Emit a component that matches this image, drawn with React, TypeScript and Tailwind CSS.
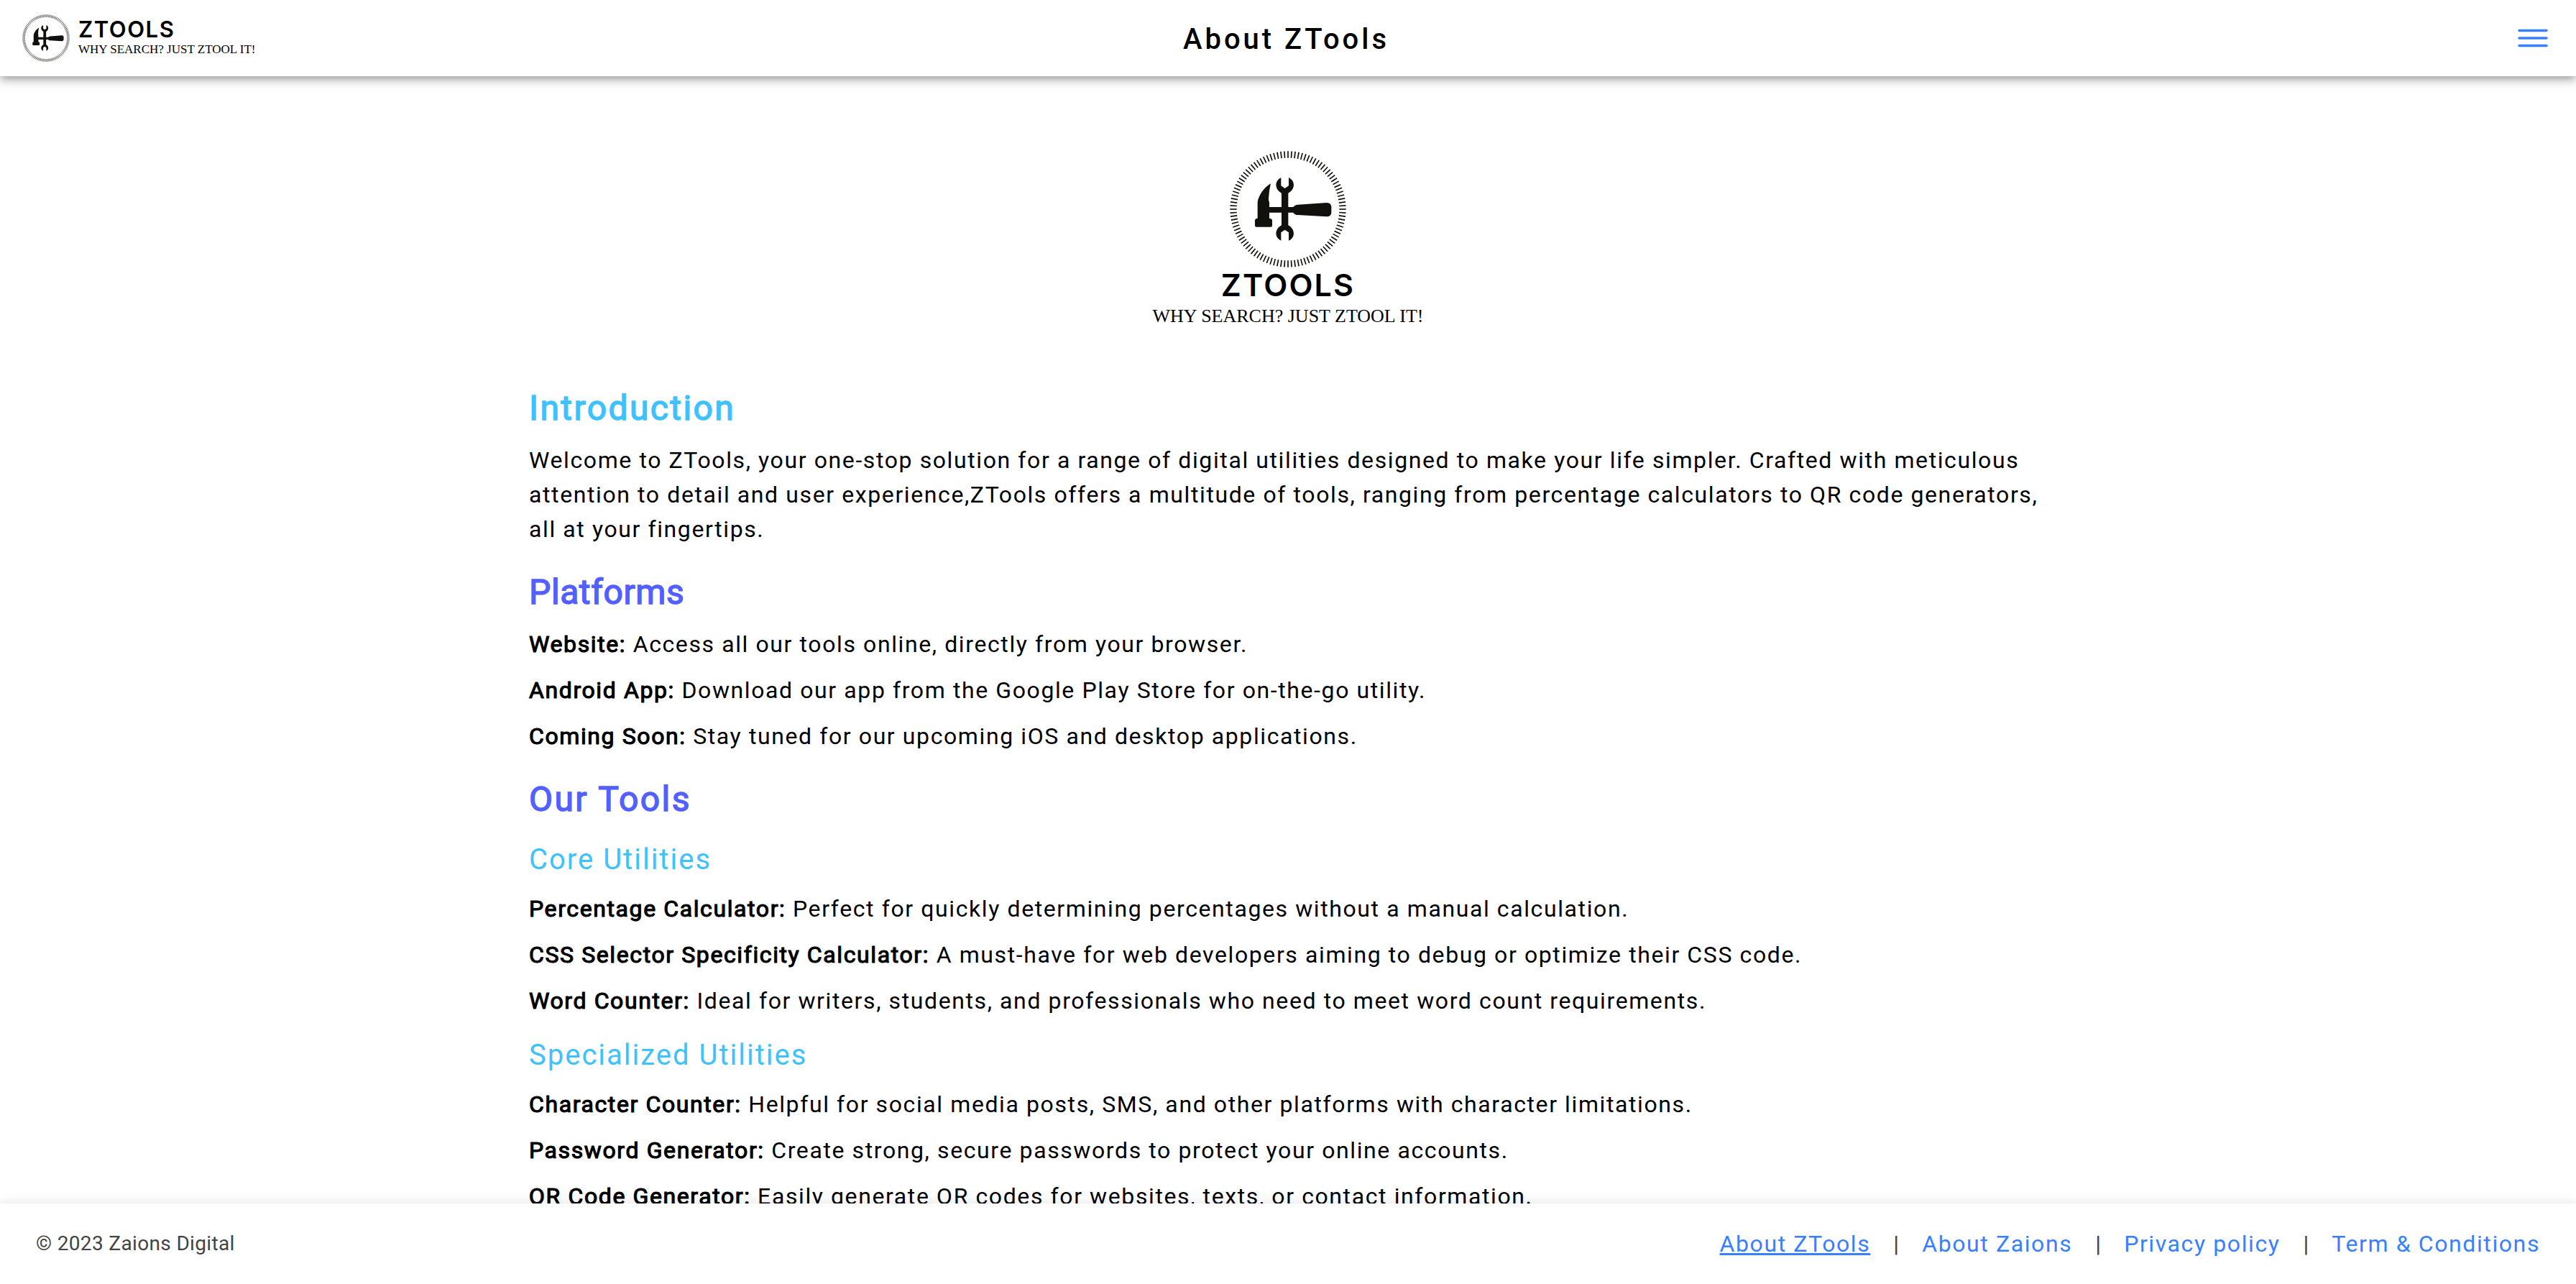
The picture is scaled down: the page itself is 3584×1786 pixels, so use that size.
const TICKS = Array.from({ length: 100 }, (_, i) => i * 3.6);

function Emblem({ className }: { className: string }) {
  return (
    <svg viewBox="-243 -243 486 486" className={className} aria-hidden="true">
      <g stroke="#11100d" strokeWidth="5">
        {TICKS.map((angle) => (
          <line key={angle} x1="0" y1="-242" x2="0" y2="-214" transform={`rotate(${angle})`} />
        ))}
      </g>
      <g fill="#11100d" transform="translate(-639 -305)">
        <path d="M567 198C539 214 515 249 512 276V343Q501 344 501 352V373Q501 379 507 379H567Q573 379 573 373V352Q573 344 561 343V319H612V372C582 388 582 424 610 436V402L626 391L642 402V436C670 424 670 388 640 372V319H661Q667 329 681 329L800 336Q820 336 820 318V296Q820 278 800 278L681 286Q667 287 661 296H640V238C670 222 670 186 642 173V207L626 218L610 207V173C582 186 582 222 612 238V296H561V276Q557 268 558 260Q560 225 567 198Z" />
      </g>
    </svg>
  );
}

type Item = { term: string; text: string };

const platforms: Item[] = [
  { term: "Website:", text: "Access all our tools online, directly from your browser." },
  { term: "Android App:", text: "Download our app from the Google Play Store for on-the-go utility." },
  { term: "Coming Soon:", text: "Stay tuned for our upcoming iOS and desktop applications." },
];

const coreUtilities: Item[] = [
  { term: "Percentage Calculator:", text: "Perfect for quickly determining percentages without a manual calculation." },
  { term: "CSS Selector Specificity Calculator:", text: "A must-have for web developers aiming to debug or optimize their CSS code." },
  { term: "Word Counter:", text: "Ideal for writers, students, and professionals who need to meet word count requirements." },
];

const specializedUtilities: Item[] = [
  { term: "Character Counter:", text: "Helpful for social media posts, SMS, and other platforms with character limitations." },
  { term: "Password Generator:", text: "Create strong, secure passwords to protect your online accounts." },
  { term: "QR Code Generator:", text: "Easily generate QR codes for websites, texts, or contact information." },
];

const footerLinks = ["About ZTools", "About Zaions", "Privacy policy", "Term & Conditions"];

function ItemList({ items }: { items: Item[] }) {
  return (
    <ul className="flex flex-col gap-4">
      {items.map((item) => (
        <li key={item.term}>
          <strong className="font-normal [-webkit-text-stroke:0.035em]">{item.term}</strong> {item.text}
        </li>
      ))}
    </ul>
  );
}

export default function App() {
  return (
    <div className="flex h-screen flex-col bg-white font-[Roboto,sans-serif] text-[32px] leading-[48px] text-black">
      <header className="z-10 grid h-[106px] shrink-0 grid-cols-[1fr_auto_1fr] items-center bg-white pr-9 pl-[31px] shadow-[0_4px_8px_-2px_rgba(0,0,0,0.2),0_8px_10px_0_rgba(0,0,0,0.14),0_2px_20px_0_rgba(0,0,0,0.12)]">
        <a href="#home" className="flex items-center gap-3 justify-self-start">
          <Emblem className="size-[66px]" />
          <span className="flex flex-col">
            <span className="font-[Inter,sans-serif] text-[31px] leading-8 font-semibold tracking-wider">ZTOOLS</span>
            <span className="font-['Liberation_Serif',serif] text-[17px] leading-6">WHY SEARCH? JUST ZTOOL IT!</span>
          </span>
        </a>
        <h1 className="pt-1 text-[40px] font-medium tracking-widest">About ZTools</h1>
        <button type="button" aria-label="Open menu" className="justify-self-end text-[#3880ff]">
          <svg viewBox="0 0 48 48" className="size-12" fill="none" stroke="currentColor" strokeWidth="3.6" strokeLinecap="round" aria-hidden="true">
            <path d="M5 13.5H43M5 24H43M5 34.5H43" />
          </svg>
        </button>
      </header>

      <main className="min-h-0 flex-1 overflow-y-auto [scrollbar-width:none]">
        <div className="mx-auto w-full max-w-[2112px] pt-[104px] tracking-wider">
          <div className="flex flex-col items-center">
            <Emblem className="size-[162px]" />
            <span className="font-[Inter,sans-serif] text-[43px] leading-12 font-semibold tracking-wider">ZTOOLS</span>
            <span className="font-['Liberation_Serif',serif] text-[26px] leading-10 tracking-normal">WHY SEARCH? JUST ZTOOL IT!</span>
          </div>

          <h2 className="mt-20 mb-5 text-5xl leading-14 font-normal tracking-wider text-[#3dc2ff] [-webkit-text-stroke:0.03em]">Introduction</h2>
          <p>
            Welcome to ZTools, your one-stop solution for a range of digital utilities designed to make your life
            simpler. Crafted with meticulous attention to detail and user experience,ZTools offers a multitude of
            tools, ranging from percentage calculators to QR code generators, all at your fingertips.
          </p>

          <h2 className="mt-9 mb-5 text-5xl leading-14 font-normal tracking-[0.0125em] text-[#5260ff] [-webkit-text-stroke:0.03em]">Platforms</h2>
          <ItemList items={platforms} />

          <h2 className="mt-9 mb-8 text-5xl leading-14 font-normal tracking-wider text-[#5260ff] [-webkit-text-stroke:0.03em]">Our Tools</h2>
          <h3 className="mb-5 text-[40px] tracking-wider text-[#3dc2ff]">Core Utilities</h3>
          <ItemList items={coreUtilities} />
          <h3 className="mt-7 mb-5 text-[40px] tracking-wider text-[#3dc2ff]">Specialized Utilities</h3>
          <ItemList items={specializedUtilities} />
        </div>
      </main>

      <footer className="z-10 flex h-28 shrink-0 items-center justify-between bg-white px-[50px] text-[#444444] shadow-[0_0_16px_0_rgba(0,0,0,0.12)]">
        <p className="text-[28px] tracking-[0.0125em]">© 2023 Zaions Digital</p>
        <nav aria-label="Footer">
          <ul className="flex">
            {footerLinks.map((label, index) => (
              <li key={label} className="flex">
                {index > 0 && <span className="px-8">|</span>}
                <a
                  href="#page"
                  aria-current={index === 0 ? "page" : undefined}
                  className="tracking-wider text-[#3880ff] aria-[current=page]:underline"
                >
                  {label}
                </a>
              </li>
            ))}
          </ul>
        </nav>
      </footer>
    </div>
  );
}
